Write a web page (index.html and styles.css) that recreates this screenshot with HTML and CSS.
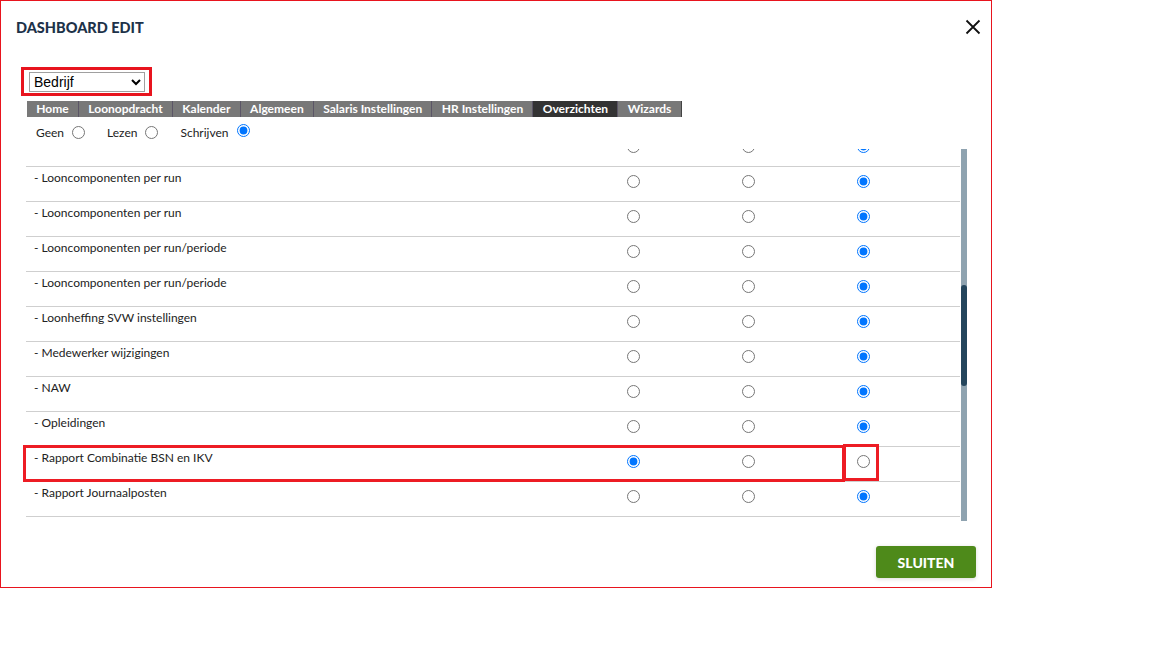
FILE: index.html
```html
<!DOCTYPE html>
<html lang="nl">
<head>
    <meta charset="UTF-8">
    <title>Dashboard edit</title>
    <link rel="stylesheet" href="styles.css">
</head>
<body>

    <div class="dialog">
        <div class="dialog-header">
            <h2>DASHBOARD EDIT</h2>
            <button class="close-btn" aria-label="Sluiten">
                <svg width="16" height="16" viewBox="0 0 16 16"><path d="M1.5 1.5 L14.5 14.5 M14.5 1.5 L1.5 14.5" stroke="#111" stroke-width="1.8" fill="none"/></svg>
            </button>
        </div>

        <div class="level-select">
            <select>
                <option>Bedrijf</option>
                <option>Afdeling</option>
                <option>Medewerker</option>
            </select>
        </div>

        <div class="tabs">
            <span class="tab">Home</span>
            <span class="tab">Loonopdracht</span>
            <span class="tab">Kalender</span>
            <span class="tab">Algemeen</span>
            <span class="tab">Salaris Instellingen</span>
            <span class="tab">HR Instellingen</span>
            <span class="tab active">Overzichten</span>
            <span class="tab">Wizards</span>
        </div>

        <div class="legend">
            <label>Geen <input type="radio" name="all"></label>
            <label>Lezen <input type="radio" name="all"></label>
            <label>Schrijven <input type="radio" name="all" checked></label>
        </div>

        <div class="rights-wrap">
            <div class="rights-list" id="rights"></div>
            <div class="scrollbar"><div class="thumb"></div></div>
        </div>

        <div class="dialog-footer">
            <button class="close-action">SLUITEN</button>
        </div>

        <div class="mark mark-row"></div>
        <div class="mark mark-cell"></div>
    </div>

    <script>
        // overzichten met rechten: 0 = geen, 1 = lezen, 2 = schrijven
        let items = [
            ["- Afdelingen", 2], ["- Arbeidsrelaties", 2], ["- Bankrekeningen", 2],
            ["- Cumulatieven per medewerker", 2], ["- Dienstverbanden", 2], ["- Functies", 2],
            ["- Grondslagen", 2], ["- Jaaropgaven", 2], ["- Journaalposten per run", 2],
            ["- Kostenplaatsen", 2], ["- Loonaangifte", 2], ["- Loonbeslagen", 2],
            ["- Loonclaims", 2], ["- Looncomponenten", 2],
            ["- Looncomponenten per run", 2], ["- Looncomponenten per run", 2],
            ["- Looncomponenten per run/periode", 2], ["- Looncomponenten per run/periode", 2],
            ["- Loonheffing SVW instellingen", 2], ["- Medewerker wijzigingen", 2],
            ["- NAW", 2], ["- Opleidingen", 2], ["- Rapport Combinatie BSN en IKV", 0],
            ["- Rapport Journaalposten", 2], ["- Rapport Loonstroken", 2],
            ["- Reserveringen", 2], ["- Salarisspecificaties", 2], ["- Tijdvakken", 2],
            ["- Toeslagen", 2], ["- Uitdiensttredingen", 2], ["- Urenregistratie", 2],
            ["- Verlof", 2], ["- Verzuim", 2], ["- Werkgeverslasten", 2],
            ["- Werkkostenregeling", 2], ["- Wijzigingen per periode", 2],
            ["- Ziekteverzuim", 2], ["- Zorgverzekeringswet", 2], ["- Zoekopdrachten", 2]
        ];

        let list = document.getElementById("rights");
        items.forEach((item, i) => {
            let row = document.createElement("div");
            row.className = "right-row";
            let html = '<span class="name">' + item[0] + '</span>';
            for (let r = 0; r < 3; r++) {
                html += '<span class="opt"><input type="radio" name="r' + i + '"' + (item[1] === r ? ' checked' : '') + '></span>';
            }
            row.innerHTML = html;
            list.appendChild(row);
        });

        list.scrollTop = 472;
    </script>

</body>
</html>
```

FILE: styles.css
```css
body {
    margin: 0;
    background: #fff;
    font-family: "Lato", "Open Sans", sans-serif;
    color: #222;
}

.dialog {
    position: relative;
    box-sizing: border-box;
    width: 992px;
    height: 588px;
    border: 1px solid #e8141e;
    background: #fff;
}

.dialog-header {
    display: flex;
    justify-content: space-between;
    align-items: center;
    padding: 14px 10px 0 15px;
    height: 24px;
}

.dialog-header h2 {
    margin: 0;
    font-size: 14.5px;
    font-weight: 900;
    color: #1d3249;
}

.close-btn {
    border: none;
    background: none;
    padding: 0;
    width: 16px;
    height: 16px;
    cursor: pointer;
}

.level-select {
    display: flex;
    width: max-content;
    margin: 28px 0 0 20px;
    padding: 2px 4px 1px 5px;
    border: 3px solid #e8141e;
}

.level-select select {
    display: block;
    width: 116px;
    height: 20px;
    font-family: "Liberation Sans", Arial, sans-serif;
    font-size: 14px;
    color: #000;
    border: 1px solid #a0a0a0;
    border-radius: 0;
    background: #fff;
    padding: 0;
}

.tabs {
    display: flex;
    margin: 5px 0 0 26px;
    width: max-content;
    background: #787878;
}

.tab {
    height: 16px;
    line-height: 16px;
    padding: 0 9.3px;
    font-size: 12px;
    font-weight: 700;
    color: #fff;
    border-right: 1px solid #5b5566;
}

.tab:last-child {
    border-right: 1px solid #444;
}

.tab.active {
    background: #333;
}

.legend {
    display: flex;
    gap: 22px;
    margin: 8px 0 0 35px;
    font-size: 12px;
    color: #222;
}

.legend label {
    display: flex;
    align-items: center;
    gap: 4px;
}

.legend input {
    margin: 0 0 0 4px;
    width: 13px;
    height: 13px;
}

.legend label:last-child input {
    margin-top: -4px;
}

.rights-wrap {
    display: flex;
    gap: 1px;
    margin: 9px 0 0 25px;
    height: 372px;
}

.rights-list {
    width: 934px;
    overflow: hidden;
}

.right-row {
    display: grid;
    grid-template-columns: 550px 115px 115px 115px 1fr;
    height: 34px;
    border-bottom: 1px solid #cfcfcf;
}

.right-row .name {
    padding: 3px 0 0 8px;
    font-size: 12px;
    color: #222;
}

.right-row .opt {
    text-align: center;
}

.right-row .opt input {
    margin: 8px 0 0 0;
    width: 13px;
    height: 13px;
}

.scrollbar {
    width: 6px;
    background: #8fa3b0;
}

.thumb {
    margin-top: 136px;
    height: 101px;
    border-radius: 3px;
    background: #24455c;
}

.dialog-footer {
    display: flex;
    justify-content: flex-end;
    padding: 25px 15px 0 0;
}

.close-action {
    width: 100px;
    height: 32px;
    border: none;
    border-radius: 3px;
    background: #4e8a1a;
    color: #fff;
    font-family: "Lato", sans-serif;
    font-size: 14px;
    font-weight: 900;
    box-shadow: 0 1px 4px rgba(0, 0, 0, 0.15);
    cursor: pointer;
}

/* annotation boxes */
.mark {
    position: absolute;
    box-sizing: border-box;
    border: 3px solid #ed1c24;
}

.mark-row {
    left: 22px;
    top: 444px;
    width: 822px;
    height: 37px;
}

.mark-cell {
    left: 842px;
    top: 443px;
    width: 36px;
    height: 37px;
}
```
